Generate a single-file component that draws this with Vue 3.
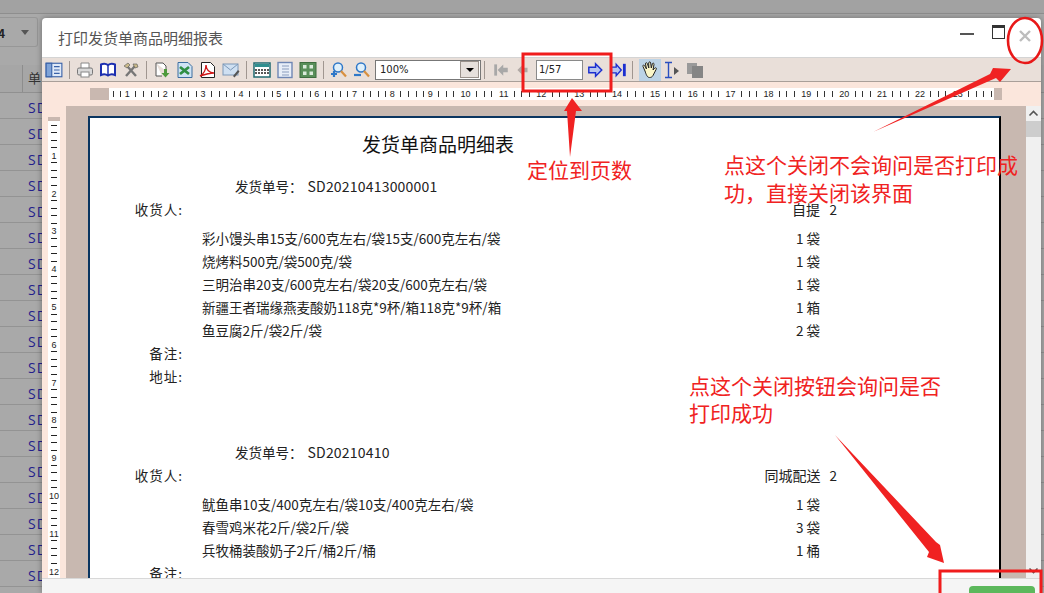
<template>
  <div class="screen">
    <!-- page behind the dialog -->
    <div class="backdrop">
      <div class="top-band"></div>
      <div class="filter">
        <span class="filter-val">4</span>
        <span class="filter-caret"></span>
      </div>
      <div class="grid-head"><span class="grid-head-cell">单</span></div>
      <div v-for="n in 19" :key="n" class="grid-row"><span class="grid-link">SD</span></div>
    </div>

    <div class="dialog">
      <div class="dlg-title">
        <span class="dlg-title-text">打印发货单商品明细报表</span>
        <span class="win-min"></span>
        <span class="win-max"></span>
        <svg class="win-close" width="14" height="14" viewBox="0 0 14 14">
          <path d="M2 2l10 10M12 2L2 12" stroke="#bdbdbd" stroke-width="2.4" fill="none" />
        </svg>
      </div>

      <div class="toolbar">
        <svg class="tb" viewBox="0 0 16 16"><rect x="1" y="2" width="14" height="12" fill="#dfe9f8" stroke="#3a62a8" /><rect x="1" y="2" width="5" height="12" fill="#7fa3d8" stroke="#3a62a8" /><path d="M8 5h5M8 8h5M8 11h5" stroke="#3a62a8" /></svg>
        <i class="sep"></i>
        <svg class="tb" viewBox="0 0 18 18"><path d="M5 7V2h8v5" fill="#fff" stroke="#888" /><rect x="1.5" y="7" width="15" height="7" rx="1.5" fill="#d8d8d8" stroke="#777" /><rect x="5" y="11" width="8" height="5" fill="#fff" stroke="#888" /></svg>
        <svg class="tb" viewBox="0 0 18 18"><path d="M9 4C7 2.500 4 2.500 2 3.500V14c2-1 5-1 7 .5 2-1.500 5-1.500 7-.5V3.500C14 2.500 11 2.500 9 4z" fill="#fff" stroke="#1c2fb0" stroke-width="2" /><path d="M9 4v10" stroke="#1c2fb0" stroke-width="1.500" /></svg>
        <svg class="tb" viewBox="0 0 18 18"><path d="M4 15L13 5M14 15L5 5" stroke="#777" stroke-width="2.400" /><path d="M2 5l4-3 2 2-3 3zM11 3l4 0 1 3-3 1z" fill="#c9b98a" stroke="#555" stroke-width=".6" /></svg>
        <i class="sep"></i>
        <svg class="tb" viewBox="0 0 18 18"><path d="M3 2h7l3 3v5" fill="#fff" stroke="#555" /><path d="M3 2v13h6" fill="#fff" stroke="#555" /><path d="M11 8h3v4h2.500l-4 4.500-4-4.500H11z" fill="#4d9a3c" /></svg>
        <svg class="tb" viewBox="0 0 18 18"><path d="M2 1.500h10l4 4v11H2z" fill="#cfe3f4" stroke="#3c6ea0" /><path d="M4 6l9 7M13 6l-9 7" stroke="#2f8f45" stroke-width="2.800" /></svg>
        <svg class="tb" viewBox="0 0 18 18"><path d="M2.500 1.500h9l4 4v11h-13z" fill="#fff" stroke="#222" /><path d="M1 15c4-2 6-7 6-11 0 4 3 8 8 8-4 0-8 1-14 3z" fill="none" stroke="#d01818" stroke-width="1.400" /></svg>
        <svg class="tb" viewBox="0 0 18 18"><rect x="1" y="3" width="15" height="11" fill="#cfe0f2" stroke="#7c98b8" /><path d="M1 3l7.500 6L16 3" fill="none" stroke="#7c98b8" /><path d="M11 15l5-6 1.500 1.500-5 6z" fill="#555" /></svg>
        <i class="sep"></i>
        <svg class="tb" viewBox="0 0 18 18"><rect x="1" y="2" width="16" height="14" fill="#fff" stroke="#1f6a70" stroke-width="1.500" /><rect x="2" y="3" width="14" height="3" fill="#2f8f8f" /><path d="M2 9h14M2 12h14" stroke="#222" stroke-width="1.600" stroke-dasharray="2 1" /></svg>
        <svg class="tb" viewBox="0 0 18 18"><rect x="2" y="1.500" width="14" height="15" fill="#e8eef8" stroke="#6f86b4" stroke-width="1.400" /><path d="M6 5h7M6 8h7M6 11h7M6 14h7" stroke="#8a9cbd" /></svg>
        <svg class="tb" viewBox="0 0 18 18"><rect x="1" y="1.500" width="16" height="15" fill="#5a8f5a" stroke="#3f6d3f" /><rect x="4" y="4" width="3.500" height="3.500" fill="#dcebdc" /><rect x="10.500" y="4" width="3.500" height="3.500" fill="#dcebdc" /><rect x="4" y="10.500" width="3.500" height="3.500" fill="#dcebdc" /><rect x="10.500" y="10.500" width="3.500" height="3.500" fill="#dcebdc" /></svg>
        <i class="sep"></i>
        <svg class="tb" viewBox="0 0 18 18"><circle cx="8" cy="6.500" r="4.500" fill="#dff0fb" stroke="#2f78c8" stroke-width="1.500" /><path d="M11 10l5 5.500" stroke="#d89040" stroke-width="2.200" /><path d="M4 10v6M1 13h6" stroke="#2f78c8" stroke-width="2.200" /></svg>
        <svg class="tb" viewBox="0 0 18 18"><circle cx="8" cy="6.500" r="4.500" fill="#dff0fb" stroke="#2f78c8" stroke-width="1.500" /><path d="M11 10l5 5.500" stroke="#d89040" stroke-width="2.200" /><path d="M1 14h7" stroke="#2f78c8" stroke-width="2.200" /></svg>
        <div class="zoom-box">
          <span>100%</span>
          <span class="zoom-btn"><em></em></span>
        </div>
        <i class="sep sep-near"></i>
        <svg class="tb tb-first" viewBox="0 0 16 16"><rect x="2" y="3" width="2.500" height="10" fill="#a8a8a8" /><path d="M5 8l5-5v3h4v4h-4v3z" fill="#a8a8a8" /></svg>
        <svg class="tb tb-prev" viewBox="0 0 16 16"><path d="M3 8l4-4v2h5v4H7v2z" fill="#b0a8a4" /></svg>
        <div class="page-box">1/57</div>
        <svg class="tb tb-next" viewBox="0 0 16 16"><path d="M14 8L8.500 2.500V5.500H2.500v5h6v3z" fill="#b7c5f0" stroke="#1c2fd0" stroke-width="1.300" /></svg>
        <svg class="tb tb-last" viewBox="0 0 16 16"><path d="M10 8L5.500 3v2.500H1v5h4.500V13z" fill="#b7c5f0" stroke="#1c2fd0" stroke-width="1.200" /><rect x="11.500" y="2.500" width="2.500" height="11" fill="#1c2fd0" /></svg>
        <i class="sep"></i>
        <span class="hand-btn">
          <svg width="20" height="20" viewBox="0 0 20 20"><path d="M5 11L3 6.500c-.5-1.500 1-2 1.800-.6L6.500 9 5.500 4c-.3-1.500 1.500-1.800 1.900-.3L8.800 8 8.700 3c0-1.500 1.800-1.500 2 0l.6 5 1-4c.4-1.400 2-1 1.700.4L13 10l1.700-1.800c1-1 2.300 0 1.500 1.100L13 15.500c-.8 1.500-2 2-3.500 2C7 17.500 6 14 5 11z" fill="#fbf6c8" stroke="#222" stroke-width="1" /></svg>
        </span>
        <svg class="tb tb-text" viewBox="0 0 20 20"><path d="M3 2.500h7M3 17.500h7M6.500 2.500v15" stroke="#2b4fc0" stroke-width="1.400" fill="none" /><path d="M12 7l5 4-5 4z" fill="#555" /></svg>
        <svg class="tb tb-copy" viewBox="0 0 18 18"><rect x="1" y="2" width="10" height="11" fill="#9a9a9a" /><rect x="6" y="5" width="11" height="12" fill="#858585" /></svg>
      </div>

      <div class="h-ruler">
        <div class="h-ruler-track">
          <span class="ruler-stub"></span>
          <span v-for="n in 23" :key="n" class="h-cell"><b>{{ n }}</b></span>
          <span class="ruler-end"></span>
        </div>
      </div>

      <div class="viewer">
        <div class="v-ruler">
          <div class="v-ruler-track">
            <span class="v-stub"></span>
            <span v-for="n in 12" :key="n" class="v-cell"><b>{{ n }}</b></span>
          </div>
        </div>

        <div class="canvas">
          <div class="sheet">
            <h2 class="sheet-title">发货单商品明细表</h2>

            <section v-for="order in orders" :key="order.no" class="order">
              <div class="order-no"><span>发货单号：</span><span class="no-val">{{ order.no }}</span></div>
              <div class="line line-recv">
                <span class="lbl">收货人:</span>
                <span class="item"></span>
                <span class="qty"><span class="ship">{{ order.ship }}</span><span class="ship-n">2</span></span>
              </div>
              <div class="goods">
                <div v-for="g in order.goods" :key="g.name" class="line">
                  <span class="lbl"></span>
                  <span class="item">{{ g.name }}</span>
                  <span class="qty">{{ g.qty }}</span>
                </div>
              </div>
              <div class="line line-note"><span class="lbl">备注:</span></div>
              <div class="line"><span class="lbl">地址:</span></div>
            </section>
          </div>
        </div>

        <div class="scrollbar">
          <svg width="15" height="15" viewBox="0 0 15 15"><path d="M3.500 9.500l4-4 4 4" stroke="#555" stroke-width="1.600" fill="none" /></svg>
          <span class="thumb"></span>
          <svg class="scroll-down" width="15" height="15" viewBox="0 0 15 15"><path d="M3.500 5.500l4 4 4-4" stroke="#555" stroke-width="1.600" fill="none" /></svg>
        </div>
      </div>

      <div class="dlg-foot"><span class="btn-close"></span></div>
    </div>

    <!-- red markup drawn on top of the screenshot -->
    <svg class="markup" width="1044" height="593" viewBox="0 0 1044 593">
      <rect x="523" y="54" width="88" height="37" fill="none" stroke="#f01c1c" stroke-width="3" />
      <ellipse cx="1025" cy="40.500" rx="17" ry="22.500" fill="none" stroke="#e81818" stroke-width="2.600" />
      <rect x="940" y="571" width="101" height="40" fill="none" stroke="#f01c1c" stroke-width="3" />
      <path d="M873 132L990 74 993 68 1011 69 1000 82 996 78z" fill="#f02222" />
      <path d="M570 157L567 111 564 111 572 98 582 111 576 111z" fill="#f02222" />
      <path d="M835 435L936 542 940 545 944 563 927 557 929 552z" fill="#f02222" />
    </svg>
    <div class="note note-page">定位到页数</div>
    <div class="note note-x">点这个关闭不会询问是否打印成<br />功，直接关闭该界面</div>
    <div class="note note-btn">点这个关闭按钮会询问是否<br />打印成功</div>
  </div>
</template>

<script setup>
const orders = [
  {
    no: 'SD20210413000001',
    ship: '自提',
    goods: [
      { name: '彩小馒头串15支/600克左右/袋15支/600克左右/袋', qty: '1 袋' },
      { name: '烧烤料500克/袋500克/袋', qty: '1 袋' },
      { name: '三明治串20支/600克左右/袋20支/600克左右/袋', qty: '1 袋' },
      { name: '新疆王者瑞缘燕麦酸奶118克*9杯/箱118克*9杯/箱', qty: '1 箱' },
      { name: '鱼豆腐2斤/袋2斤/袋', qty: '2 袋' },
    ],
  },
  {
    no: 'SD20210410',
    ship: '同城配送',
    goods: [
      { name: '鱿鱼串10支/400克左右/袋10支/400克左右/袋', qty: '1 袋' },
      { name: '春雪鸡米花2斤/袋2斤/袋', qty: '3 袋' },
      { name: '兵牧桶装酸奶子2斤/桶2斤/桶', qty: '1 桶' },
    ],
  },
]
</script>

<style>
html, body { margin: 0; padding: 0; }
</style>

<style scoped>
.screen {
  position: relative; width: 1044px; height: 593px; overflow: hidden;
  background: #a9a9a9; color: #1a1a1a;
  font-family: "Noto Sans CJK SC", "Noto Sans", sans-serif;
}

.top-band { height: 13px; border-bottom: 1px solid #8e8e8e; background: #a2a2a2; }
.filter {
  display: flex; align-items: center; justify-content: space-between;
  width: 38px; height: 30px; margin-top: 3px; padding-right: 8px; box-sizing: border-box;
  border: 1px solid #979797; border-left: none; border-radius: 0 3px 3px 0;
}
.filter-val { font-size: 12px; font-weight: 700; color: #222; margin-left: -2px; }
.filter-caret { border: 4px solid transparent; border-top: 5px solid #555; border-bottom: none; }
.grid-head {
  height: 27px; margin-top: 18px; padding-left: 22px; display: flex;
  border-bottom: 1px solid #909090; background: #a6a6a6;
}
.grid-head-cell { border-left: 1px solid #8d8d8d; padding: 3px 0 0 5px; font-size: 13px; color: #333; white-space: nowrap; }
.grid-row { height: 25px; padding-left: 28px; border-bottom: 1px solid #939393; line-height: 26px; }
.grid-link { font-size: 14px; letter-spacing: 1px; color: #241e8c; font-family: "Open Sans", sans-serif; }

.dialog {
  position: absolute; left: 42px; top: 18px; width: 999px; height: 575px;
  display: flex; flex-direction: column; background: #fff;
  border-radius: 4px 4px 0 0; box-shadow: 0 0 6px rgba(0, 0, 0, .35);
}
.dlg-title {
  display: flex; align-items: center; height: 40px; flex: none; padding-left: 16px; box-sizing: border-box;
  border-bottom: 1px solid #d4d4d4;
}
.dlg-title-text { font-size: 15px; color: #555; flex: 1; }
.win-min { width: 14px; height: 2px; background: #555; margin: -8px 18px 0 0; }
.win-max { width: 11px; height: 10px; border: 1px solid #333; border-top-width: 3px; margin: -12px 13px 0 0; }
.win-close { margin: -4px 9px 0 0; }

.toolbar {
  display: flex; align-items: center; height: 24px; flex: none; box-sizing: border-box;
  background: #e9dfd9; border-bottom: 1px solid #a99f99;
}
.tb { width: 18px; height: 18px; margin: 0 2.500px; flex: none; }
.sep { width: 1px; height: 18px; background: #a09690; margin: 0 3.500px; flex: none; }
.sep-near { margin: 0 3px; }
.zoom-box {
  display: flex; align-items: center; justify-content: space-between; box-sizing: border-box; flex: none;
  width: 106px; height: 20px; margin-left: 2px; padding: 0 1px 0 4px;
  background: #fff; border: 1px solid #777; font-size: 10px; color: #222;
  font-family: "DejaVu Sans", sans-serif;
}
.zoom-btn {
  display: flex; align-items: center; justify-content: center;
  width: 17px; height: 15px; background: #e6e0dc; border: 1px solid #9a928c;
}
.zoom-btn em { border: 4px solid transparent; border-top: 4px solid #000; border-bottom: none; }
.tb-first { margin: 0 2.500px 0 4px; }
.tb-prev { margin: 0 4px 0 1.500px; }
.page-box {
  width: 47px; height: 20px; box-sizing: border-box; padding-left: 2px; flex: none;
  background: #fff; border: 1px solid #8a8a8a; font-size: 10px; line-height: 18px; color: #222;
  font-family: "DejaVu Sans", sans-serif;
}
.tb-next { margin: 0 3px; }
.tb-last { margin: 0 .5px 0 3px; }
.hand-btn {
  display: flex; align-items: center; justify-content: center;
  width: 22px; height: 22px; background: #bcd3e6; flex: none; margin-left: 2.500px;
}
.tb-text { width: 20px; height: 20px; margin: 0 0 0 1px; }
.tb-copy { margin: 0 0 0 4px; }

.h-ruler { height: 24px; flex: none; padding: 6px 0 6px 48px; box-sizing: border-box; background: #fbe6dc; }
.h-ruler-track {
  display: flex; width: 912px; height: 12px; overflow: hidden;
  background: #fff repeating-linear-gradient(90deg, #333 0 1px, transparent 1px 7.570px) 0 3px / 100% 6px no-repeat;
}
.ruler-stub { width: 19px; flex: none; background: #c9b8b0; }
.h-cell {
  width: 37.860px; flex: none; display: flex; justify-content: flex-end;
  position: relative; left: -16px;
}
.h-cell b { font-weight: 400; font-size: 9px; line-height: 12px; color: #222; background: #fff; font-family: "Liberation Sans", sans-serif; padding: 0 1px; }
.ruler-end { width: 8px; flex: none; background: #c9b8b0; margin-left: auto; }

.viewer { flex: 1; min-height: 0; display: flex; overflow: hidden; }
.v-ruler { width: 24px; flex: none; padding-left: 6px; box-sizing: border-box; background: #fbe6dc; }
.v-ruler-track {
  width: 12px; height: 100%; margin-top: 11px;
  background: #fff repeating-linear-gradient(180deg, #222 0 1px, transparent 1px 7.560px) 3px 0 / 6px 100% no-repeat;
}
.v-stub { display: block; height: 4px; margin-bottom: 3px; background: #c9b8b0; }
.v-cell { display: flex; height: 37.800px; align-items: flex-end; justify-content: center; }
.v-cell b { font-weight: 400; font-size: 9px; line-height: 12px; color: #222; background: #fff; font-family: "Liberation Sans", sans-serif; }

.canvas { flex: 1; min-width: 0; padding: 10px 25px 0 22px; background: #c8b8b0; overflow: hidden; }
.sheet {
  height: 600px; box-sizing: border-box; background: #fff;
  border: 2px solid #000; border-color: #0a3560 #000 #000 #0a3560;
}
.sheet-title { margin: 12px 0 0 272px; font-size: 19px; font-weight: 400; line-height: 28px; color: #111; }

.order { padding-top: 17px; height: 266px; box-sizing: border-box; }
.order-no { margin-left: 145px; height: 22px; line-height: 22px; font-size: 13.500px; color: #222; display: flex; }
.no-val { margin-left: 5px; font-size: 14px; letter-spacing: .2px; }
.line { display: flex; height: 23px; line-height: 23px; font-size: 13.500px; color: #222; }
.line-recv { height: 22px; line-height: 24px; }
.line-note { line-height: 22px; }
.goods { margin-top: 8px; }
.lbl { width: 93px; flex: none; text-align: right; letter-spacing: 1px; }
.item { width: 582px; flex: none; margin-left: 19px; white-space: nowrap; }
.qty { width: 36px; flex: none; text-align: right; white-space: nowrap; display: flex; justify-content: flex-end; }
.ship { font-size: 14px; }
.ship-n { margin: 0 -17px 0 9px; width: 8px; }

.scrollbar { width: 15px; flex: none; display: flex; flex-direction: column; background: #f0f0f0; }
.thumb { height: 16px; background: #cdcdcd; }
.scroll-down { margin-top: auto; }

.dlg-foot {
  height: 15px; flex: none; display: flex; justify-content: flex-end; padding: 7px 6px 0 0; box-sizing: border-box;
  background: #f5f5f5; border-top: 1px solid #d8d8d8;
}
.btn-close { width: 66px; height: 20px; background: #5cb85c; border-radius: 4px; }

.markup { position: absolute; left: 0; top: 0; pointer-events: none; }
.note { position: absolute; font-size: 21px; line-height: 28px; color: #f02222; white-space: nowrap; }
.note-page { left: 527px; top: 155px; }
.note-x { left: 724px; top: 150px; }
.note-btn { left: 689px; top: 372px; line-height: 27px; }
</style>
